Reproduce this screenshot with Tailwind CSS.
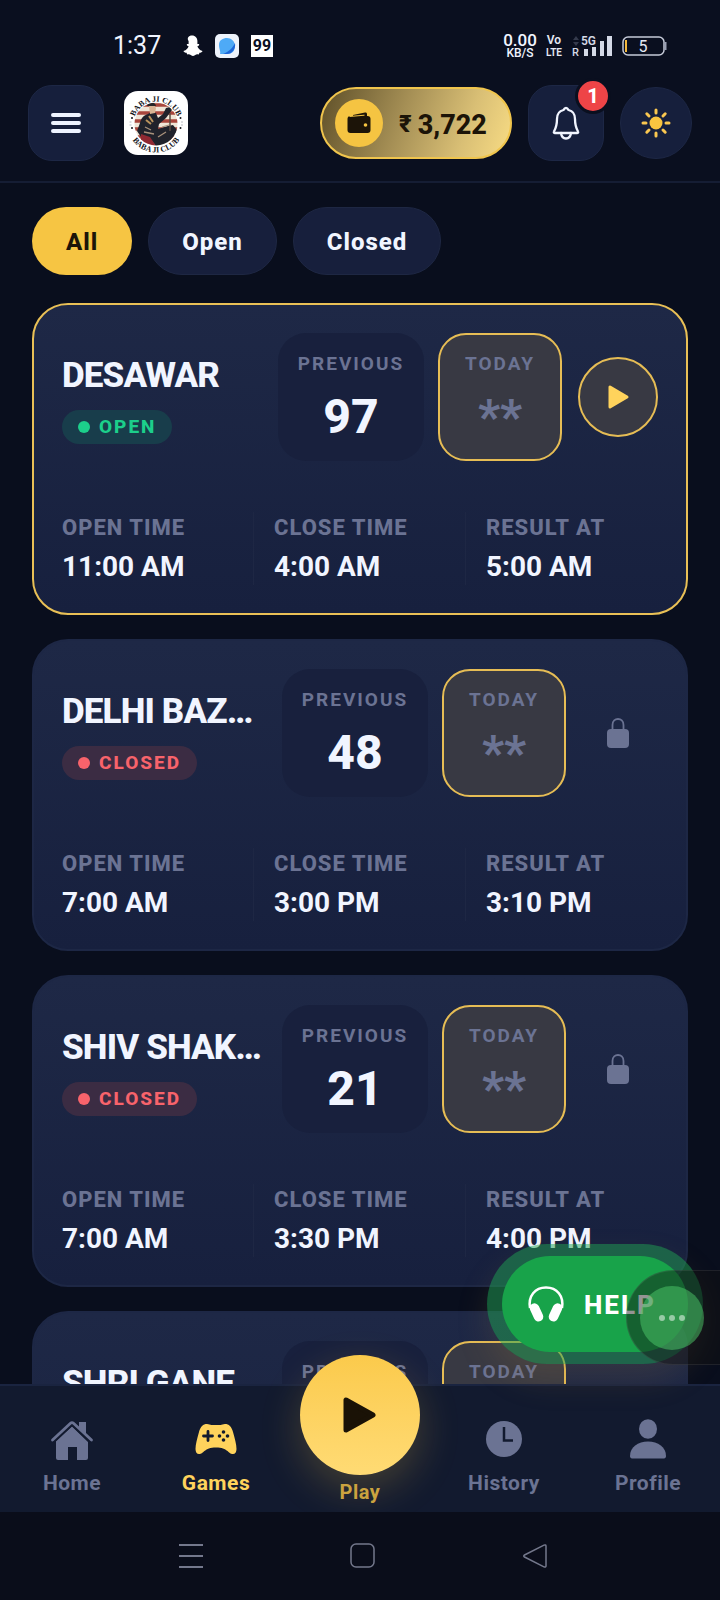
<!DOCTYPE html>
<html lang="en">
<head>
    <meta charset="UTF-8">
    <meta name="viewport" content="width=device-width, initial-scale=1.0">
    <title>Baba Ji Club - Games</title>
    <script src="https://cdn.jsdelivr.net/npm/@tailwindcss/browser@4"></script>
</head>
<body class="bg-[#090e1d] font-[Roboto,sans-serif] text-[#f1f5ff]">
<div class="relative flex h-screen flex-col overflow-hidden">

    <!-- Status bar -->
    <div class="flex h-[84px] shrink-0 items-center justify-between bg-[#0a0f1f] pt-2 pr-[53px] pl-[113px]">
        <div class="flex items-center">
            <span class="w-[68px] text-[25px] leading-8">1:37</span>
            <svg class="mr-3 h-6 w-[22px]" viewBox="0 0 22 24" fill="#fff"><path d="M11 1.500c3.400 0 5.400 2.500 5.400 5.600v2.800l1.800.1-.2 1.400-1.600.9c.7 2.200 2.100 3.900 5.100 4.600-.2 1.300-1.600 1.700-3.100 1.900l-.5 1.600c-1.900-.3-2.900-.1-4 .8-1.200.9-2.600.9-3.800 0-1.100-.9-2.100-1.100-4-.8l-.5-1.600c-1.500-.2-2.900-.6-3.100-1.900 3-.7 4.400-2.400 5.100-4.600l-1.600-.9-.2-1.400 1.800-.1V7.100C5.600 4 7.600 1.500 11 1.500z"/></svg>
            <svg class="mr-3 size-6" viewBox="0 0 24 24"><rect width="24" height="24" rx="5" fill="#eef3fb"/><path d="M4 11C4 6 8 4 12 4s8 3 8 8-3 8-8 8H5c1-2-1-5-1-9z" fill="#4eaaf6"/><path d="M20 9c1 6-3 11-8 11H8C13 18 18 14 20 9z" fill="#1d66d8"/></svg>
            <span class="flex h-[22px] w-[22px] items-center justify-center bg-white text-[16px] font-bold text-[#0a0f1f]">99</span>
        </div>
        <div class="flex items-center">
            <div class="mr-2 flex w-[36px] flex-col items-center font-medium">
                <span class="text-[17px] leading-[14px]">0.00</span>
                <span class="text-[12px] leading-[12px]">KB/S</span>
            </div>
            <svg class="mr-[10px] h-[22px] w-[16px] overflow-visible" viewBox="0 0 16 22" fill="#e4e8f3" font-size="12" font-weight="600" text-anchor="middle">
                <text x="8" y="9">Vo</text>
                <text x="8" y="21" font-size="10">LTE</text>
            </svg>
            <svg class="mr-[10px] h-[22px] w-[40px]" viewBox="0 0 40 22" fill="#d4d9e6">
                <path d="M1 5l3-4 3 4zM1 7l3 4 3-4z" fill="#343a4c"/>
                <text x="9" y="10" font-size="12" font-weight="600">5G</text>
                <text x="0" y="21" font-size="11" font-weight="500">R</text>
                <path d="M12 14h4v7h-4zM20 12h4v9h-4zM28 6h4v15h-4zM35 1h5v20h-5z"/>
            </svg>
            <svg class="h-5 w-[45px]" viewBox="0 0 45 20">
                <rect x="1" y="1" width="41" height="18" rx="5" fill="none" stroke="#c5cad8" stroke-width="1.500"/>
                <rect x="3" y="4" width="2" height="12" fill="#f5b93c"/>
                <path d="M43.500 6v8" stroke="#9ba1b4" stroke-width="2"/>
                <text x="21" y="16" font-size="16" fill="#e4e8f3" text-anchor="middle">5</text>
            </svg>
        </div>
    </div>

    <!-- App header -->
    <header class="flex h-[99px] shrink-0 items-center justify-between border-b-2 border-[#151d34] bg-[#0a0f1f] px-7 pb-[19px]">
        <div class="flex items-center gap-5">
            <button aria-label="Menu" class="flex size-[76px] items-center justify-center rounded-[24px] border border-[#1d2745] bg-[#161f3c]">
                <svg class="h-6 w-8" viewBox="0 0 32 24" stroke="#eef3ff" stroke-width="4" stroke-linecap="round"><path d="M3 4h26M3 12h26M3 20h26"/></svg>
            </button>
            <svg class="size-16" viewBox="0 0 64 64" role="img" aria-label="Baba Ji Club">
                <defs>
                    <clipPath id="disc"><circle cx="32" cy="33" r="21.500"/></clipPath>
                    <path id="arcTop" d="M9.500 33a22.500 22.500 0 0 1 45 0"/>
                    <path id="arcBottom" d="M3.500 33a28.500 28.500 0 0 0 57 0"/>
                </defs>
                <rect width="64" height="64" rx="14" fill="#fff"/>
                <g clip-path="url(#disc)">
                    <rect x="10" y="11" width="44" height="44" fill="#efe5d6"/>
                    <path d="M10 14h44M10 22h44M10 30h44M10 38h44M10 46h44" stroke="#a8453c" stroke-width="3.500"/>
                    <path d="M16 32c1-5 4-8 8-9l3-2 5 1 2 5 5-4 3-6 4-1 2 3-6 8-7 6-1 5 10-3 5-1 4 5v16H32l-6-7-9-2-4-6z" fill="#20222b"/>
                    <path d="M25 15l5-1 2 3-1 5-5 1z" fill="#d9b494"/>
                    <path d="M23 15c1-5 8-5 9 0z" fill="#242427"/>
                    <path d="M25 25l4 6M22 29l5 4" stroke="#b9925b" stroke-width="2"/>
                    <path d="M17 43l9 3 6 9H17z" fill="#8f2832"/>
                    <path d="M21 36l6 3M20 41l10 2M38 36l7-2M34 46l8-5" stroke="#a9927c" stroke-width="1.300"/>
                    <path d="M46 22v18" stroke="#5b4b40" stroke-width="1.500"/>
                </g>
                <g font-family="Liberation Serif, serif" font-size="8" font-weight="700" fill="#15151b">
                    <text text-anchor="middle"><textPath href="#arcTop" startOffset="50%">BABA JI CLUB</textPath></text>
                    <text text-anchor="middle"><textPath href="#arcBottom" startOffset="50%">BABA JI CLUB</textPath></text>
                </g>
                <g fill="#15151b"><circle cx="8" cy="27" r="1"/><circle cx="8" cy="37" r="1"/><circle cx="56.500" cy="27" r="1"/><circle cx="56.500" cy="37" r="1"/></g>
                <path d="M5.500 31h2M5.500 34h2M57 31h2M57 34h2" stroke="#b8bac2"/>
            </svg>
        </div>

        <div class="flex items-center gap-4">
            <button class="flex h-[72px] w-48 items-center rounded-full border-2 border-[#f0c54d] bg-linear-[110deg,#5f5029,#a58f55_42%,#d9bf75_75%,#f8dc84] pl-[13px] text-[#1c1408]">
                <span class="mr-4 flex size-12 items-center justify-center rounded-full bg-[#f5c442]">
                    <svg class="h-6 w-7" viewBox="0 0 28 24" fill="#1c1408"><path d="M8 4L20 1.500c1.200-.2 2 .5 2 1.500v2H8z"/><rect x="2.500" y="5" width="23" height="17" rx="3"/><path d="M4.500 5.500l15-1.300" stroke="#f5c442"/><circle cx="20.500" cy="14" r="1.800" fill="#f5c442"/></svg>
                </span>
                <span class="mr-[6px] pt-[2px] text-[24px] font-extrabold">₹</span>
                <span class="pt-1 text-[27px] font-extrabold">3,722</span>
            </button>
            <button aria-label="Notifications" class="relative flex size-[76px] items-center justify-center rounded-[24px] border border-[#1d2745] bg-[#161f3c]">
                <svg class="h-9 w-8" viewBox="0 0 32 36" fill="none" stroke="#f1f5ff" stroke-width="2.300" stroke-linejoin="round" stroke-linecap="round"><path d="M16 3c-1.500 0-2 1-2.500 2C9 6 7 9.500 7 14c0 6-1 9-3 12.500-.5.800 0 1.500 1 1.500h22c1 0 1.500-.7 1-1.500C26 23 25 20 25 14c0-4.500-2-8-6.500-9-.5-1-1-2-2.500-2z"/><path d="M11 28c.5 4 2.500 5.500 5 5.500s4.500-1.500 5-5.500"/></svg>
                <span class="absolute -top-2 -right-2 flex size-9 items-center justify-center rounded-full border-3 border-[#0a0f1f] bg-[#ee4447] text-[20px] font-extrabold text-white">1</span>
            </button>
            <button aria-label="Toggle theme" class="flex size-[72px] items-center justify-center rounded-full border border-[#1d2745] bg-[#161f3c]">
                <svg class="size-8" viewBox="0 0 32 32" stroke="#fac750" stroke-width="3" stroke-linecap="round"><circle cx="16" cy="16" r="6.500" fill="#f9c440" stroke="none"/><path d="M16 3v3M16 26v3M3 16h3M26 16h3M6.800 6.800l2.200 2.200M23 23l2.200 2.200M25.200 6.800l-2.200 2.200M9 23l-2.200 2.200"/></svg>
            </button>
        </div>
    </header>

    <main class="min-h-0 flex-1 overflow-hidden px-8 pt-6">
        <!-- Filters -->
        <div class="flex gap-4 text-[24px] font-extrabold tracking-[1px]">
            <button class="h-[68px] rounded-full bg-[#f6c543] px-[34px] pt-[2px] text-[#1c1408]">All</button>
            <button class="h-[68px] rounded-full border border-[#1e2743] bg-[#171f3c] px-[33px] pt-[2px]">Open</button>
            <button class="h-[68px] rounded-full border border-[#1e2743] bg-[#171f3c] px-[33px] pt-[2px]">Closed</button>
        </div>

        <div id="games" class="mt-7 flex flex-col gap-6"></div>
    </main>

    <!-- Bottom navigation -->
    <nav class="relative grid h-32 shrink-0 grid-cols-5 border-t-2 border-[#1a2440] bg-[#121a2f] text-[21px] font-bold tracking-[0.5px] text-[#6b7393]">
        <a href="#" class="flex flex-col items-center pt-8">
            <svg class="size-11" viewBox="0 0 44 44" fill="#6b7393"><path d="M22 8.500L38 24v16a2 2 0 0 1-2 2h-9V29h-9v13H8a2 2 0 0 1-2-2V23z"/><path d="M2 23L20.500 5.500a2.200 2.200 0 0 1 3 0L42 23" fill="none" stroke="#121a2f" stroke-width="6"/><path d="M2.500 22L20.500 5.300a2.200 2.200 0 0 1 3 0L41.500 22" fill="none" stroke="#6b7393" stroke-width="2.800" stroke-linecap="round"/><path d="M29 4h7v13l-7-6z"/></svg>
            <span class="mt-[7px] leading-7">Home</span>
        </a>
        <a href="#" class="flex flex-col items-center pt-8 text-[#ffd35c]">
            <svg class="size-11" viewBox="0 0 44 44"><path d="M13 6c2 0 3 1 4.500 1h9C28 7 29 6 31 6c4 0 6.500 2.500 8 8 1.800 6.500 3.500 12.500 3.500 17 0 3-1.300 5-3.500 5-5 0-5-6.500-17-6.500S10 36 5 36c-2.200 0-3.500-2-3.500-5 0-4.500 1.700-10.500 3.500-17 1.500-5.500 4-8 8-8z" fill="#ffd35c"/><path d="M14 13.500v9M9.500 18h9" stroke="#121a2f" stroke-width="2.800" stroke-linecap="round"/><g fill="#121a2f"><circle cx="29.500" cy="14" r="1.800"/><circle cx="29.500" cy="22" r="1.800"/><circle cx="25.500" cy="18" r="1.800"/><circle cx="33.500" cy="18" r="1.800"/></g></svg>
            <span class="mt-[7px] leading-7">Games</span>
        </a>
        <a href="#" class="-mt-[31px] flex flex-col items-center text-[20px] text-[#cba33f]">
            <span class="flex size-[120px] items-center justify-center rounded-full bg-linear-to-b from-[#fbca4b] to-[#ffdb74] shadow-[0_14px_40px_rgba(245,196,66,0.22)]">
                <svg class="h-10 w-9" viewBox="0 0 36 40"><path d="M4 5v30l27-15z" fill="#1a1206" stroke="#1a1206" stroke-width="5" stroke-linejoin="round"/></svg>
            </span>
            <span class="mt-[3px] leading-7">Play</span>
        </a>
        <a href="#" class="flex flex-col items-center pt-8">
            <svg class="size-11" viewBox="0 0 44 44"><circle cx="22" cy="21" r="18" fill="#6b7393"/><path d="M22 9v13.500h9" fill="none" stroke="#121a2f" stroke-width="2.500"/></svg>
            <span class="mt-[7px] leading-7">History</span>
        </a>
        <a href="#" class="flex flex-col items-center pt-8">
            <svg class="size-11" viewBox="0 0 44 44" fill="#6b7393"><ellipse cx="22" cy="11" rx="9" ry="9.800"/><path d="M4 38c0-9 8-14.500 18-14.500S40 29 40 38c0 1.500-.8 2.500-2 2.500H6c-1.200 0-2-1-2-2.500z"/></svg>
            <span class="mt-[7px] leading-7">Profile</span>
        </a>
    </nav>

    <!-- System navigation -->
    <div class="z-10 flex h-[88px] shrink-0 items-center justify-between bg-[#0a0d1a] pr-[168px] pl-[174px]">
        <svg class="size-[34px]" viewBox="0 0 34 34" stroke="#74788c" stroke-width="2"><path d="M5 6h24M5 17h24M5 28h24"/></svg>
        <svg class="size-[34px]" viewBox="0 0 34 34" fill="none" stroke="#74788c" stroke-width="1.500"><rect x="5" y="5" width="23" height="23" rx="5"/></svg>
        <svg class="size-[34px]" viewBox="0 0 34 34" fill="none" stroke="#74788c" stroke-width="1.500" stroke-linejoin="round"><path d="M28 7v20c0 1-1 1.300-2 .8L6.500 18c-1-.5-1-1.500 0-2L26 6.200c1-.5 2-.2 2 .8z"/></svg>
    </div>

    <!-- Floating help button -->
    <div class="absolute right-8 bottom-[248px] h-24 w-[186px]">
        <div class="absolute -inset-x-[15px] -inset-y-3 rounded-full bg-[#22a352]/50 shadow-[0_16px_32px_rgba(160,120,60,0.18)]"></div>
        <button class="relative flex h-full w-full items-center rounded-full bg-[#18a34a] pl-[26px] text-[26px] font-extrabold tracking-[2px] text-white">
            <svg class="mr-5 size-9 overflow-visible" viewBox="0 0 36 36"><path d="M2 22C0 10 7 1.500 18 1.500S36 10 34 22" fill="none" stroke="#fff" stroke-width="2.500"/><rect x="4" y="17" width="9.500" height="19" rx="4.700" transform="rotate(-25 8.500 27)" fill="#fff"/><rect x="22.500" y="17" width="9.500" height="19" rx="4.700" transform="rotate(25 27.500 27)" fill="#fff"/></svg>
            <span class="pt-[2px]">HELP</span>
        </button>
    </div>

    <!-- Edge panel handle -->
    <div class="absolute right-0 bottom-[235px] flex h-[95px] w-[94px] items-center rounded-l-full border border-r-0 border-white/8 bg-[#111111]/45 pl-[13px]">
        <button aria-label="More" class="flex size-16 items-center justify-center gap-1 rounded-full bg-[#4ecc6a]/50">
            <span class="size-[6px] rounded-full bg-white/50"></span>
            <span class="size-[6px] rounded-full bg-white/50"></span>
            <span class="size-[6px] rounded-full bg-white/50"></span>
        </button>
    </div>
</div>

<script>
    const games = [
        { name: 'DESAWAR', open: true, previous: '97', times: ['11:00 AM', '4:00 AM', '5:00 AM'] },
        { name: 'DELHI BAZAAR', open: false, previous: '48', times: ['7:00 AM', '3:00 PM', '3:10 PM'] },
        { name: 'SHIV SHAKTI DAY', open: false, previous: '21', times: ['7:00 AM', '3:30 PM', '4:00 PM'] },
        { name: 'SHRI GANESH', open: false, previous: '64', times: ['7:00 AM', '4:30 PM', '4:50 PM'] },
    ];
    const timeLabels = ['OPEN TIME', 'CLOSE TIME', 'RESULT AT'];

    const playButton = `
        <button aria-label="Play" class="flex size-20 shrink-0 items-center justify-center rounded-full border-2 border-[#e6bd55] bg-[#383943]">
            <svg class="size-7" viewBox="0 0 28 28"><path d="M6 4v20l17-10z" fill="#ffd35c" stroke="#ffd35c" stroke-width="3" stroke-linejoin="round"/></svg>
        </button>`;
    const lockIcon = `
        <span class="mr-1 flex w-[72px] shrink-0 justify-center">
            <svg class="h-8 w-6" viewBox="0 0 24 32"><path d="M6.500 13V8c0-8 11-8 11 0v5" fill="none" stroke="#6b7393" stroke-width="1.800"/><rect x="1" y="12" width="22" height="19" rx="4" fill="#6b7393"/></svg>
        </span>`;

    function badge(open) {
        return open
            ? `<span class="flex h-[34px] items-center gap-[9px] rounded-full bg-[#183d4b] px-4 text-[19px] font-extrabold tracking-[2px] text-[#1ccf8b]"><i class="size-3 rounded-full bg-[#1ccf8b]"></i>OPEN</span>`
            : `<span class="flex h-[34px] items-center gap-[9px] rounded-full bg-[#3b2c43] px-4 text-[19px] font-extrabold tracking-[2px] text-[#f8636b]"><i class="size-3 rounded-full bg-[#f8636b]"></i>CLOSED</span>`;
    }

    function card(game) {
        return `
        <article class="rounded-[36px] border-2 bg-linear-to-b from-[#1e2846] to-[#17203e] p-7 ${game.open ? 'border-[#e9c056]' : 'border-[#1d2745]'}">
            <div class="flex items-center">
                <div class="mr-4 flex min-w-0 flex-1 flex-col items-start pt-1">
                    <h2 class="mb-3 w-full truncate text-[35px] leading-[44px] font-extrabold tracking-tight">${game.name}</h2>
                    ${badge(game.open)}
                </div>
                <div class="mr-[14px] flex h-32 w-[146px] shrink-0 flex-col items-center rounded-[28px] bg-[#18203d] pt-[19px]">
                    <span class="mb-[13px] text-[19px] leading-6 font-bold tracking-[2px] text-[#6b7393]">PREVIOUS</span>
                    <span class="text-[48px] leading-14 font-extrabold">${game.previous}</span>
                </div>
                <div class="mr-4 flex h-32 w-[124px] shrink-0 flex-col items-center rounded-[28px] border-2 border-[#e6bd55] bg-[#383943] pt-[17px] text-[#6b7393]">
                    <span class="mb-[13px] text-[19px] leading-6 font-bold tracking-[2px]">TODAY</span>
                    <span class="text-[48px] leading-14 font-extrabold">**</span>
                </div>
                ${game.open ? playButton : lockIcon}
            </div>
            <div class="-mx-5 mt-[25px] grid grid-cols-3 divide-x divide-[#1e2744] pt-[26px]">
                ${timeLabels.map((label, i) => `
                <div class="px-5">
                    <p class="text-[22px] leading-8 font-extrabold tracking-[1px] text-[#6b7393]">${label}</p>
                    <p class="mt-[5px] text-[28px] leading-9 font-bold">${game.times[i]}</p>
                </div>`).join('')}
            </div>
        </article>`;
    }

    document.getElementById('games').innerHTML = games.map(card).join('');
</script>
</body>
</html>
